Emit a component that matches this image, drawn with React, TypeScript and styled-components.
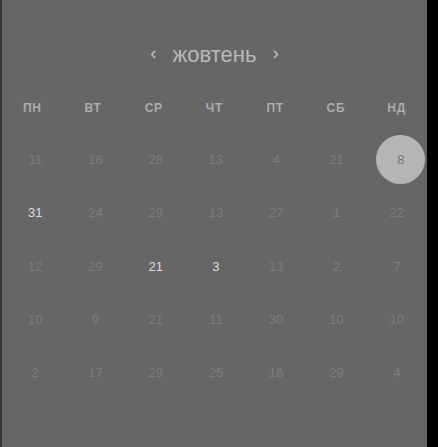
import React from "react";
import styled, { createGlobalStyle } from "styled-components";

const Global = createGlobalStyle`
  html, body { margin: 0; padding: 0; background: #000; }
  body { font-family: "Liberation Sans", Arial, sans-serif; }
`;

const Page = styled.div`
  display: flex;
  height: 447px;
  width: 438px;
  background: #000;
`;

const Panel = styled.div`
  width: 425px;
  height: 447px;
  border-left: 2px solid #363636;
  background: #666666;
  overflow: hidden;
  display: flex;
  flex-direction: column;
`;

const Header = styled.div`
  margin-top: 40px;
  height: 30px;
  display: flex;
  align-items: center;
  justify-content: center;
  gap: 16px;
  color: #b9b9b9;
`;

const Arrow = styled.span`
  font-size: 19px;
  line-height: 30px;
  margin-top: -5px;
  color: #c4c4c4;
`;

const Month = styled.span`
  font-size: 22px;
  line-height: 30px;
`;

const Weekdays = styled.div`
  margin-top: 28px;
  height: 20px;
  display: grid;
  grid-template-columns: repeat(7, 1fr);
  align-items: center;
`;

const Weekday = styled.div`
  text-align: center;
  font-size: 12px;
  font-weight: bold;
  color: #acacac;
  letter-spacing: 0.8px;
`;

const Days = styled.div`
  margin-top: 15px;
  padding-left: 3px;
  display: grid;
  grid-template-columns: repeat(7, 1fr);
  grid-auto-rows: 53.3px;
`;

const Cell = styled.div`
  display: flex;
  align-items: center;
  justify-content: center;
`;

const Day = styled.div<{ $tone: "dim" | "bright" | "selected" }>`
  width: 49px;
  height: 49px;
  border-radius: 50%;
  display: flex;
  align-items: center;
  justify-content: center;
  font-size: 13px;
  color: ${(p) =>
    p.$tone === "bright" ? "#dcdcdc" : p.$tone === "selected" ? "#777777" : "#7c7c7c"};
  background: ${(p) => (p.$tone === "selected" ? "#b5b5b5" : "transparent")};
  transform: ${(p) => (p.$tone === "selected" ? "translateX(4px)" : "none")};
`;

const weekdays = ["ПН", "ВТ", "СР", "ЧТ", "ПТ", "СБ", "НД"];

const days: [string, "dim" | "bright" | "selected"][][] = [
  [["11", "dim"], ["16", "dim"], ["28", "dim"], ["13", "dim"], ["4", "dim"], ["21", "dim"], ["8", "selected"]],
  [["31", "bright"], ["24", "dim"], ["29", "dim"], ["13", "dim"], ["27", "dim"], ["1", "dim"], ["22", "dim"]],
  [["12", "dim"], ["29", "dim"], ["21", "bright"], ["3", "bright"], ["13", "dim"], ["2", "dim"], ["7", "dim"]],
  [["10", "dim"], ["9", "dim"], ["21", "dim"], ["11", "dim"], ["30", "dim"], ["10", "dim"], ["10", "dim"]],
  [["2", "dim"], ["17", "dim"], ["29", "dim"], ["25", "dim"], ["16", "dim"], ["29", "dim"], ["4", "dim"]],
];

export default function App() {
  return (
    <>
      <Global />
      <Page>
        <Panel>
          <Header>
            <Arrow>‹</Arrow>
            <Month>жовтень</Month>
            <Arrow>›</Arrow>
          </Header>
          <Weekdays>
            {weekdays.map((w) => (
              <Weekday key={w}>{w}</Weekday>
            ))}
          </Weekdays>
          <Days>
            {days.flat().map(([n, tone], i) => (
              <Cell key={i}>
                <Day $tone={tone}>{n}</Day>
              </Cell>
            ))}
          </Days>
        </Panel>
      </Page>
    </>
  );
}
